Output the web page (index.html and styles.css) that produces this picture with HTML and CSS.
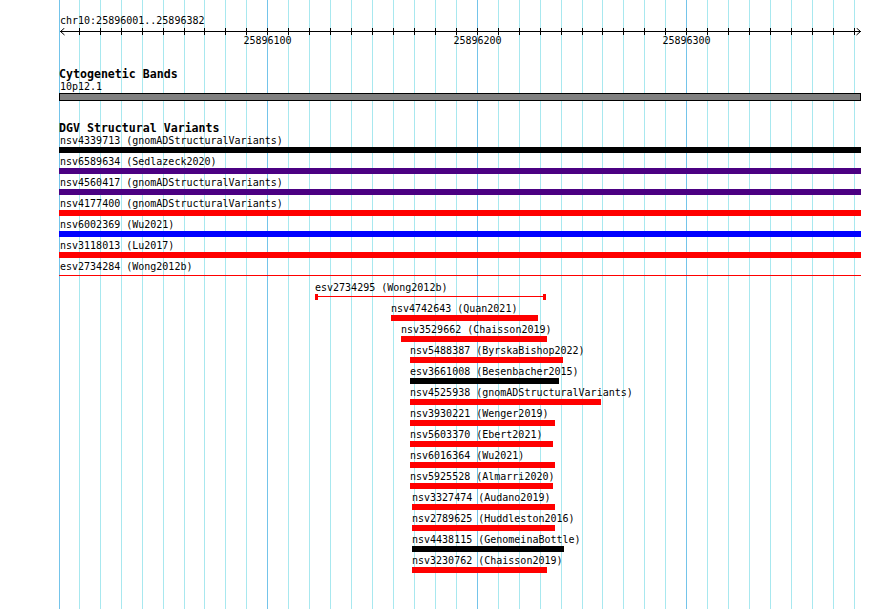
FILE: index.html
```html
<!DOCTYPE html>
<html lang="en">
  <head>
    <meta charset="UTF-8" />
    <title>chr10:25896001..25896382</title>
    <link rel="stylesheet" href="styles.css">
  </head>
  <body>
    <div class="view">
      <svg class="grid" width="890" height="609" viewBox="0 0 890 609">
        <g class="minor">
          <path d="M79.5 0V609M100.5 0V609M121.5 0V609M142.5 0V609M163.5 0V609M184.5 0V609M204.5 0V609M225.5 0V609M246.5 0V609
                   M288.5 0V609M309.5 0V609M330.5 0V609M351.5 0V609M372.5 0V609M393.5 0V609M414.5 0V609M435.5 0V609M456.5 0V609
                   M498.5 0V609M519.5 0V609M540.5 0V609M561.5 0V609M582.5 0V609M602.5 0V609M623.5 0V609M644.5 0V609M665.5 0V609
                   M707.5 0V609M728.5 0V609M749.5 0V609M770.5 0V609M791.5 0V609M812.5 0V609M833.5 0V609M854.5 0V609" />
        </g>
        <g class="major">
          <path d="M59.5 0V609M267.5 0V609M477.5 0V609M686.5 0V609" />
        </g>
      </svg>

      <div class="content">
        <div class="loc">chr10:25896001..25896382</div>
        <svg class="ruler" width="803" height="18" viewBox="0 0 803 18">
          <path class="axis" d="M1 3.5H802M5.5 0L1.5 3.5L5.5 7M797.5 0L801.5 3.5L797.5 7" />
          <path class="ticks" d="M20.5 0V7M41.5 0V7M62.5 0V7M83.5 0V7M104.5 0V7M125.5 0V7M145.5 0V7M166.5 0V7M187.5 0V7M208.5 0V7
                   M229.5 0V7M250.5 0V7M271.5 0V7M292.5 0V7M313.5 0V7M334.5 0V7M355.5 0V7M376.5 0V7M397.5 0V7M418.5 0V7
                   M439.5 0V7M460.5 0V7M481.5 0V7M502.5 0V7M523.5 0V7M543.5 0V7M564.5 0V7M585.5 0V7M606.5 0V7M627.5 0V7
                   M648.5 0V7M669.5 0V7M690.5 0V7M711.5 0V7M732.5 0V7M753.5 0V7M774.5 0V7M795.5 0V7" />
          <text x="208.5" y="15.5">25896100</text>
          <text x="418.5" y="15.5">25896200</text>
          <text x="627.5" y="15.5">25896300</text>
        </svg>

        <div class="track cyto">
          <div class="track-title">Cytogenetic Bands</div>
          <div class="band-label">10p12.1</div>
          <div class="band"></div>
        </div>

        <div class="track dgv">
          <div class="track-title">DGV Structural Variants</div>
          <div class="rows">
            <div class="row"><div class="feat full black"><span class="lbl">nsv4339713 (gnomADStructuralVariants)</span><span class="bar"></span></div></div>
            <div class="row"><div class="feat full indigo"><span class="lbl">nsv6589634 (Sedlazeck2020)</span><span class="bar"></span></div></div>
            <div class="row"><div class="feat full indigo"><span class="lbl">nsv4560417 (gnomADStructuralVariants)</span><span class="bar"></span></div></div>
            <div class="row"><div class="feat full red"><span class="lbl">nsv4177400 (gnomADStructuralVariants)</span><span class="bar"></span></div></div>
            <div class="row"><div class="feat full blue"><span class="lbl">nsv6002369 (Wu2021)</span><span class="bar"></span></div></div>
            <div class="row"><div class="feat full red"><span class="lbl">nsv3118013 (Lu2017)</span><span class="bar"></span></div></div>
            <div class="row"><div class="feat full line"><span class="lbl">esv2734284 (Wong2012b)</span><span class="bar"></span></div></div>
            <div class="row"><div class="feat line capped" style="margin-left:256px;width:231px"><span class="lbl">esv2734295 (Wong2012b)</span><span class="bar"></span></div></div>
            <div class="row"><div class="feat red" style="margin-left:332px;width:147px"><span class="lbl">nsv4742643 (Quan2021)</span><span class="bar"></span></div></div>
            <div class="row"><div class="feat red" style="margin-left:342px;width:146px"><span class="lbl">nsv3529662 (Chaisson2019)</span><span class="bar"></span></div></div>
            <div class="row"><div class="feat red" style="margin-left:351px;width:153px"><span class="lbl">nsv5488387 (ByrskaBishop2022)</span><span class="bar"></span></div></div>
            <div class="row"><div class="feat black" style="margin-left:351px;width:149px"><span class="lbl">esv3661008 (Besenbacher2015)</span><span class="bar"></span></div></div>
            <div class="row"><div class="feat red" style="margin-left:351px;width:191px"><span class="lbl">nsv4525938 (gnomADStructuralVariants)</span><span class="bar"></span></div></div>
            <div class="row"><div class="feat red" style="margin-left:351px;width:145px"><span class="lbl">nsv3930221 (Wenger2019)</span><span class="bar"></span></div></div>
            <div class="row"><div class="feat red" style="margin-left:351px;width:143px"><span class="lbl">nsv5603370 (Ebert2021)</span><span class="bar"></span></div></div>
            <div class="row"><div class="feat red" style="margin-left:351px;width:145px"><span class="lbl">nsv6016364 (Wu2021)</span><span class="bar"></span></div></div>
            <div class="row"><div class="feat red" style="margin-left:351px;width:143px"><span class="lbl">nsv5925528 (Almarri2020)</span><span class="bar"></span></div></div>
            <div class="row"><div class="feat red" style="margin-left:353px;width:143px"><span class="lbl">nsv3327474 (Audano2019)</span><span class="bar"></span></div></div>
            <div class="row"><div class="feat red" style="margin-left:353px;width:143px"><span class="lbl">nsv2789625 (Huddleston2016)</span><span class="bar"></span></div></div>
            <div class="row"><div class="feat black" style="margin-left:353px;width:152px"><span class="lbl">nsv4438115 (GenomeinaBottle)</span><span class="bar"></span></div></div>
            <div class="row"><div class="feat red" style="margin-left:353px;width:135px"><span class="lbl">nsv3230762 (Chaisson2019)</span><span class="bar"></span></div></div>
          </div>
        </div>
      </div>
    </div>
  </body>
</html>
```

FILE: styles.css
```css
* {
  box-sizing: border-box;
}
body {
  margin: 0;
  font-family: "DejaVu Sans Mono", "Liberation Mono", monospace;
  font-size: 10px;
  color: #000;
  background: #fff;
}
.view {
  position: relative;
  width: 890px;
  height: 609px;
  overflow: hidden;
}
.grid {
  position: absolute;
  left: 0;
  top: 0;
}
.grid path {
  fill: none;
  stroke-width: 1;
  shape-rendering: crispEdges;
}
.grid .minor path {
  stroke: #a8e8ef;
}
.grid .major path {
  stroke: #74c4ea;
}
.content {
  position: relative;
  z-index: 1;
  padding-top: 15px;
}
.loc {
  margin-left: 60px;
  height: 12px;
  line-height: 12px;
}
.ruler {
  display: block;
  margin-top: 1px;
  margin-left: 59px;
}
.ruler path {
  fill: none;
  stroke: #000;
  stroke-width: 1;
  shape-rendering: crispEdges;
}
.ruler .axis {
  shape-rendering: auto;
}
.ruler text {
  font-family: "DejaVu Sans Mono", "Liberation Mono", monospace;
  font-size: 10px;
  text-anchor: middle;
  fill: #000;
}
.track-title {
  margin-left: 59px;
  height: 13px;
  font-weight: bold;
  font-size: 11.6px;
  line-height: 13px;
}
.cyto {
  margin-top: 22px;
}
.band-label {
  margin-left: 60px;
  height: 12px;
  line-height: 12px;
}
.band {
  margin-left: 59px;
  width: 802px;
  height: 8px;
  background: #808080;
  border: 1px solid #000;
}
.dgv {
  margin-top: 21px;
}
.rows {
  margin-left: 59px;
  width: 802px;
  overflow: hidden;
}
.row {
  height: 21px;
}
.feat {
  width: 802px;
}
.lbl {
  display: block;
  height: 12px;
  line-height: 12px;
  white-space: nowrap;
}
.full .lbl {
  padding-left: 1px;
}
.bar {
  display: block;
  height: 6px;
}
.black .bar {
  background: #000;
}
.indigo .bar {
  background: #4b0082;
}
.red .bar {
  background: #f00;
}
.blue .bar {
  background: #00f;
}
.line .bar {
  background: linear-gradient(#f00, #f00) 0 2px / 100% 1px no-repeat;
}
.capped .bar {
  border-left: 3px solid #f00;
  border-right: 3px solid #f00;
}
```
